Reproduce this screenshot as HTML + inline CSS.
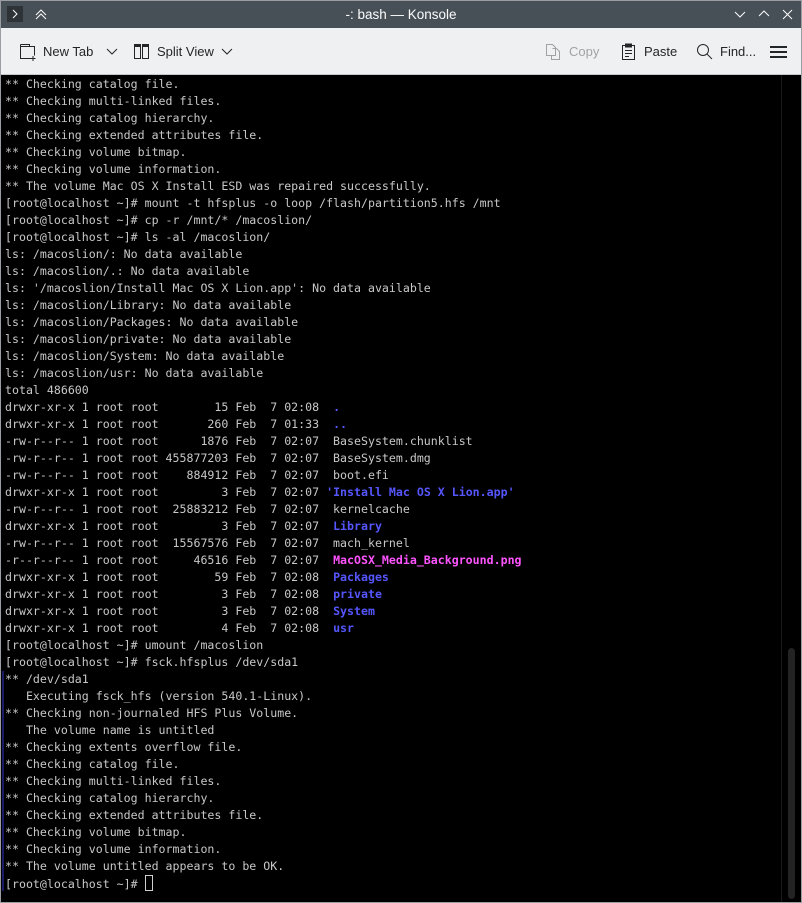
<!DOCTYPE html>
<html><head><meta charset="utf-8">
<style>
html,body{margin:0;padding:0;width:802px;height:903px;overflow:hidden;background:#fff}
#win{position:absolute;left:0;top:0;width:800px;height:901px;border:1px solid #9a9ea2;background:#000}
#title{position:absolute;left:0;top:0;width:800px;height:27px;background:#475057;color:#fcfcfc;font:13.5px "Liberation Sans",sans-serif}
#title .t{position:absolute;left:0;right:0;top:6px;text-align:center}
#tb{position:absolute;left:0;top:27px;width:800px;height:46px;background:#eff0f1;border-bottom:1px solid #c5c8cb;font:13px "Liberation Sans",sans-serif;color:#232629}
#tb span{position:absolute;top:16px}
#term{position:absolute;left:0;top:74px;width:780px;height:827px;background:#000;border-right:1px solid #1a1a1a}
pre{margin:0;position:absolute;left:4px;top:1px;font:11.6px/17px "DejaVu Sans Mono","Liberation Mono",monospace;color:#c8c8c8;white-space:pre}
.b{color:#5656ff;font-weight:bold}
.m{color:#ff54ff;font-weight:bold}
#sb{position:absolute;left:787px;top:647px;width:7px;height:251px;background:#232323;border-radius:4px}
#mark{position:absolute;left:1px;top:670px;width:2px;height:220px;background:#1a1a66}
.cur{display:inline-block;width:6px;height:14px;border:1px solid #d0d0d0;vertical-align:-3px}
</style></head><body>
<div id="win">
<div id="title">
<div style="position:absolute;left:6px;top:5px;width:16px;height:16px;background:#2e3338"></div>
<svg style="position:absolute;left:6px;top:5px" width="16" height="16"><path d="M6 4l4 4-4 4" stroke="#fcfcfc" fill="none"/></svg>
<svg style="position:absolute;left:32px;top:5px" width="16" height="16"><path d="M3 9l5-5 5 5M3 13l5-5 5 5" stroke="#fcfcfc" fill="none"/></svg>
<div class="t">-: bash — Konsole</div>
<svg style="position:absolute;left:732px;top:7px" width="14" height="12"><path d="M2 4l5 5 5-5" stroke="#fcfcfc" fill="none"/></svg>
<svg style="position:absolute;left:756px;top:7px" width="14" height="12"><path d="M2 8l5-5 5 5" stroke="#fcfcfc" fill="none"/></svg>
<svg style="position:absolute;left:780px;top:7px" width="14" height="14"><path d="M2 2l9 9M11 2l-9 9" stroke="#fcfcfc" fill="none"/></svg>
</div>
<div id="tb">
<svg style="position:absolute;left:18px;top:15px" width="18" height="18"><path d="M1.5 1.5h9v2h5v9M1.5 1.5v14h10" stroke="#232629" fill="none"/><path d="M1.5 3.5h14" stroke="#232629"/><path d="M14 13v5M11.5 15.5h5" stroke="#232629"/></svg>
<span style="left:42px">New Tab</span>
<svg style="position:absolute;left:105px;top:20px" width="12" height="8"><path d="M1 1l5 5 5-5" stroke="#232629" fill="none"/></svg>
<svg style="position:absolute;left:132px;top:15px" width="18" height="18"><rect x="1.5" y="1.5" width="6" height="14" stroke="#232629" fill="none"/><rect x="9.5" y="1.5" width="6" height="14" stroke="#232629" fill="none"/><path d="M1.5 3h6M9.5 3h6" stroke="#232629" stroke-width="2"/></svg>
<span style="left:156px">Split View</span>
<svg style="position:absolute;left:220px;top:20px" width="12" height="8"><path d="M1 1l5 5 5-5" stroke="#232629" fill="none"/></svg>
<svg style="position:absolute;left:544px;top:15px" width="16" height="18"><path d="M1.5 1.5h6l3 3v8h-9z" stroke="#a0a3a6" fill="none"/><path d="M7.5 5.5h4l3 3v8h-8v-4" stroke="#a0a3a6" fill="none"/></svg>
<span style="left:568px;color:#a0a3a6">Copy</span>
<svg style="position:absolute;left:620px;top:15px" width="16" height="18"><rect x="1.5" y="2.5" width="12" height="14" stroke="#232629" fill="none"/><rect x="4" y="0.5" width="7" height="4" fill="#232629"/><path d="M4 7.5h7M4 10.5h7M4 13.5h4" stroke="#232629"/></svg>
<span style="left:643px">Paste</span>
<svg style="position:absolute;left:695px;top:15px" width="18" height="18"><circle cx="7" cy="7" r="5.5" stroke="#232629" fill="none"/><path d="M11 11l5 5" stroke="#232629"/></svg>
<span style="left:719px">Find...</span>
<svg style="position:absolute;left:769px;top:17px" width="18" height="14"><path d="M0 2h17M0 7h17M0 12h17" stroke="#232629" stroke-width="2"/></svg>
</div>
<div id="term">
<pre>** Checking catalog file.
** Checking multi-linked files.
** Checking catalog hierarchy.
** Checking extended attributes file.
** Checking volume bitmap.
** Checking volume information.
** The volume Mac OS X Install ESD was repaired successfully.
[root@localhost ~]# mount -t hfsplus -o loop /flash/partition5.hfs /mnt
[root@localhost ~]# cp -r /mnt/* /macoslion/
[root@localhost ~]# ls -al /macoslion/
ls: /macoslion/: No data available
ls: /macoslion/.: No data available
ls: '/macoslion/Install Mac OS X Lion.app': No data available
ls: /macoslion/Library: No data available
ls: /macoslion/Packages: No data available
ls: /macoslion/private: No data available
ls: /macoslion/System: No data available
ls: /macoslion/usr: No data available
total 486600
drwxr-xr-x 1 root root        15 Feb  7 02:08  <span class="b">.</span>
drwxr-xr-x 1 root root       260 Feb  7 01:33  <span class="b">..</span>
-rw-r--r-- 1 root root      1876 Feb  7 02:07  BaseSystem.chunklist
-rw-r--r-- 1 root root 455877203 Feb  7 02:07  BaseSystem.dmg
-rw-r--r-- 1 root root    884912 Feb  7 02:07  boot.efi
drwxr-xr-x 1 root root         3 Feb  7 02:07 <span class="b">'Install Mac OS X Lion.app'</span>
-rw-r--r-- 1 root root  25883212 Feb  7 02:07  kernelcache
drwxr-xr-x 1 root root         3 Feb  7 02:07  <span class="b">Library</span>
-rw-r--r-- 1 root root  15567576 Feb  7 02:07  mach_kernel
-r--r--r-- 1 root root     46516 Feb  7 02:07  <span class="m">MacOSX_Media_Background.png</span>
drwxr-xr-x 1 root root        59 Feb  7 02:08  <span class="b">Packages</span>
drwxr-xr-x 1 root root         3 Feb  7 02:08  <span class="b">private</span>
drwxr-xr-x 1 root root         3 Feb  7 02:08  <span class="b">System</span>
drwxr-xr-x 1 root root         4 Feb  7 02:08  <span class="b">usr</span>
[root@localhost ~]# umount /macoslion
[root@localhost ~]# fsck.hfsplus /dev/sda1
** /dev/sda1
   Executing fsck_hfs (version 540.1-Linux).
** Checking non-journaled HFS Plus Volume.
   The volume name is untitled
** Checking extents overflow file.
** Checking catalog file.
** Checking multi-linked files.
** Checking catalog hierarchy.
** Checking extended attributes file.
** Checking volume bitmap.
** Checking volume information.
** The volume untitled appears to be OK.
[root@localhost ~]# <span class="cur"></span></pre>
</div>
<div id="mark"></div>
<div id="sb"></div>
</div>
</body></html>
